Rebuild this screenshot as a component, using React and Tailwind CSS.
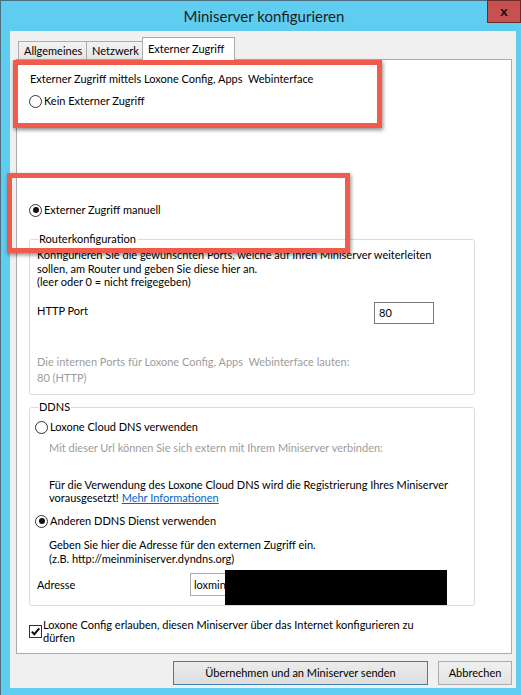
const Radio = ({ checked, label, className = '' }) => (
  <div className={`flex items-center gap-[2px] h-[14px] ${className}`}>
    <span className="w-[13px] h-[13px] rounded-full border border-[#333] bg-white flex items-center justify-center shrink-0">
      {checked && <span className="w-[6px] h-[6px] rounded-full bg-[#111]" />}
    </span>
    <span className="leading-[14px] whitespace-nowrap">{label}</span>
  </div>
);

const Tab = ({ label, active, w }) =>
  active ? (
    <div className={`${w} h-[23px] -mb-px z-10 pl-[5px] bg-white border border-b-0 border-[#acacac] leading-[21px] whitespace-nowrap`}>
      {label}
    </div>
  ) : (
    <div className={`${w} h-[18px] pl-[5px] bg-gradient-to-b from-[#f2f2f2] to-[#e6e6e6] border border-b-0 border-r-0 border-[#acacac] leading-[18px] whitespace-nowrap`}>
      {label}
    </div>
  );

export default function App() {
  return (
    <div className="relative w-[521px] h-[695px] bg-[#5fcdf0] border-l border-t border-[#4d6f80] flex flex-col font-['Lato',sans-serif] text-[11px] text-black">
      {/* title bar */}
      <div className="relative h-[30px] flex items-center justify-center">
        <span className="text-[15px] text-[#1c1c1c] mt-[1px] ml-[6px]">Miniserver konfigurieren</span>
        <div className="absolute right-0 -top-px w-[34px] h-[23px] bg-[#c75050] border border-[#6e2a2a] flex items-center justify-center">
          <span className="text-[14px] font-bold text-[#111] leading-none -mt-[2px]">x</span>
        </div>
      </div>

      {/* client area */}
      <div className="ml-[9px] mr-[5px] h-[657px] bg-[#f0f0f0] pl-[6px] pr-[4px] flex flex-col">
        <div className="flex items-end h-[28px] ml-[2px]">
          <Tab w="w-[68px]" label="Allgemeines" />
          <Tab w="w-[56px]" label="Netzwerk" />
          <Tab w="w-[93px]" label="Externer Zugriff" active />
        </div>

        <div className="h-[595px] border border-[#acacac] bg-white pl-[12px] flex flex-col">
          <div className="mt-[12px] ml-[1px] leading-[13px]">Externer Zugriff mittels Loxone Config, Apps&nbsp; Webinterface</div>
          <Radio className="mt-[9px]" label="Kein Externer Zugriff" />
          <Radio className="mt-[95px]" checked label="Externer Zugriff manuell" />

          <fieldset className="mt-[15px] w-[446px] h-[163px] border border-[#dcdcdc] rounded-[3px] px-[7px]">
            <legend className="ml-[1px] px-[1px] leading-[14px]">Routerkonfiguration</legend>
            <div className="mt-[2px] leading-[13.5px]">
              Konfigurieren Sie die gewünschten Ports, welche auf Ihren Miniserver weiterleiten
              <br />
              sollen, am Router und geben Sie diese hier an.
              <br />
              (leer oder 0 = nicht freigegeben)
            </div>
            <div className="mt-[13px] flex h-[22px]">
              <div className="w-[337px] pt-[2px] leading-[13px]">HTTP Port</div>
              <div className="w-[60px] h-[22px] border border-[#7a7a7a] bg-white px-[4px] leading-[20px]">80</div>
            </div>
            <div className="mt-[31px] leading-[13px] text-[#9d9d9d]">Die internen Ports für Loxone Config, Apps&nbsp; Webinterface lauten:</div>
            <div className="mt-[3px] leading-[13px] text-[#9d9d9d]">80 (HTTP)</div>
          </fieldset>

          <fieldset className="mt-[5px] w-[446px] h-[206px] border border-[#dcdcdc] rounded-[3px] px-[5px]">
            <legend className="ml-[3px] px-[1px] leading-[14px]">DDNS</legend>
            <Radio className="mt-[6px]" label="Loxone Cloud DNS verwenden" />
            <div className="mt-[7px] ml-[14px] leading-[13px] text-[#9d9d9d]">
              Mit dieser Url können Sie sich extern mit Ihrem Miniserver verbinden:
            </div>
            <div className="mt-[24px] ml-[14px] leading-[13px]">
              Für die Verwendung des Loxone Cloud DNS wird die Registrierung Ihres Miniserver
              <br />
              vorausgesetzt! <span className="text-[#0066cc] underline">Mehr Informationen</span>
            </div>
            <Radio className="mt-[10px]" checked label="Anderen DDNS Dienst verwenden" />
            <div className="mt-[10px] ml-[14px] leading-[14px]">
              Geben Sie hier die Adresse für den externen Zugriff ein.
              <br />
              (z.B. http://meinminiserver.dyndns.org)
            </div>
            <div className="mt-[7px] flex h-[23px] items-center">
              <div className="w-[155px] pl-[2px] leading-[13px]">Adresse</div>
              <div className="relative w-[256px] h-[23px] border border-[#abadb3] bg-white px-[3px] leading-[21px]">
                loxmin
                <div className="absolute left-[34px] -top-[4px] w-[222px] h-[35px] bg-black" />
              </div>
            </div>
          </fieldset>

          <div className="mt-[12px] flex items-center gap-[1px]">
            <span className="w-[13px] h-[13px] border border-[#333] bg-white flex items-center justify-center shrink-0">
              <svg width="11" height="11" viewBox="0 0 11 11">
                <path d="M1.8 5.6 L4.3 8.2 L9.3 2.4" fill="none" stroke="#111" strokeWidth="2" />
              </svg>
            </span>
            <span className="leading-[13px]">
              Loxone Config erlauben, diesen Miniserver über das Internet konfigurieren zu
              <br />
              dürfen
            </span>
          </div>
        </div>

        <div className="mt-[7px] flex justify-end gap-[10px]">
          <button className="w-[255px] h-[24px] border border-[#3c7fb1] bg-gradient-to-b from-[#ececec] to-[#dddddd] text-[11px] leading-[22px]">
            Übernehmen und an Miniserver senden
          </button>
          <button className="w-[74px] h-[24px] border border-[#acacac] bg-gradient-to-b from-[#f0f0f0] to-[#e3e3e3] text-[11px] leading-[22px]">
            Abbrechen
          </button>
        </div>
      </div>

      {/* annotation boxes */}
      <div className="absolute left-[12px] top-[59px] w-[369px] h-[68px] border-[5px] border-[#f05b4c] shadow-[1px_2px_4px_rgba(0,0,0,0.45)]" />
      <div className="absolute left-[6px] top-[172px] w-[343px] h-[80px] border-[5px] border-[#f05b4c] shadow-[1px_2px_4px_rgba(0,0,0,0.45)]" />
    </div>
  );
}
